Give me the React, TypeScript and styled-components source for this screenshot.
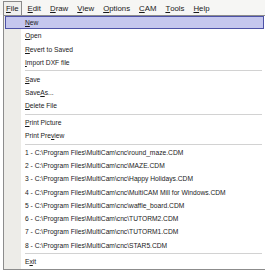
import React from "react";
import styled, { createGlobalStyle } from "styled-components";

const GlobalStyle = createGlobalStyle`
  html, body {
    margin: 0;
    padding: 0;
    background: #ffffff;
  }
  body {
    font-family: "Liberation Sans", Arial, sans-serif;
    color: #1a1a1a;
  }
`;

const Screen = styled.div`
  width: 265px;
  height: 270px;
  overflow: hidden;
  background: #ffffff;
`;

const MenuBar = styled.div`
  height: 15px;
  display: flex;
  align-items: flex-end;
  padding-left: 3px;
  background: #f6f6f4;
  font-size: 7.8px;
`;

const BarItem = styled.div<{ $open?: boolean }>`
  height: 13px;
  display: flex;
  align-items: center;
  padding: 0 2px;
  margin-right: 3px;
  border: 1px solid ${(p) => (p.$open ? "#8a8a8a" : "transparent")};
  border-bottom: none;
  background: ${(p) => (p.$open ? "#f0f0ee" : "transparent")};
`;

const Dropdown = styled.div`
  margin-left: 3px;
  width: 259px;
  border: 1px solid #8c8c8c;
  padding: 0 1px;
  background: linear-gradient(to right, #edece8 0, #edece8 17px, #ffffff 17px);
  display: flex;
  flex-direction: column;
  font-size: 6.7px;
`;

const Item = styled.div<{ $active?: boolean }>`
  height: 13.25px;
  display: flex;
  align-items: center;
  padding-left: 19px;
  box-sizing: border-box;
  border: 1px solid ${(p) => (p.$active ? "#4d52a6" : "transparent")};
  background: ${(p) => (p.$active ? "#c5c7ee" : "transparent")};
  white-space: nowrap;
`;

const Separator = styled.div`
  height: 3.5px;
  display: flex;
  align-items: center;
  padding-left: 20px;
  padding-right: 2px;

  &::after {
    content: "";
    flex: 1;
    height: 1px;
    background: #d2d2d2;
  }
`;

const Key = styled.span`
  text-decoration: underline;
  text-underline-offset: 1px;
`;

const label = (text: string, key?: number) => {
  if (key === undefined) return text;
  return (
    <>
      {text.slice(0, key)}
      <Key>{text[key]}</Key>
      {text.slice(key + 1)}
    </>
  );
};

const barItems: [string, number][] = [
  ["File", 0],
  ["Edit", 0],
  ["Draw", 0],
  ["View", 0],
  ["Options", 0],
  ["CAM", 0],
  ["Tools", 0],
  ["Help", 0],
];

type Entry = { text: string; key?: number } | "sep";

const entries: Entry[] = [
  { text: "New", key: 0 },
  { text: "Open", key: 0 },
  { text: "Revert to Saved", key: 0 },
  { text: "Import DXF file", key: 0 },
  "sep",
  { text: "Save", key: 0 },
  { text: "Save As...", key: 5 },
  { text: "Delete File", key: 0 },
  "sep",
  { text: "Print Picture", key: 0 },
  { text: "Print Preview", key: 9 },
  "sep",
  { text: "1 - C:\\Program Files\\MultiCam\\cnc\\round_maze.CDM" },
  { text: "2 - C:\\Program Files\\MultiCam\\cnc\\MAZE.CDM" },
  { text: "3 - C:\\Program Files\\MultiCam\\cnc\\Happy Holidays.CDM" },
  { text: "4 - C:\\Program Files\\MultiCam\\cnc\\MultiCAM Mill for Windows.CDM" },
  { text: "5 - C:\\Program Files\\MultiCam\\cnc\\waffle_board.CDM" },
  { text: "6 - C:\\Program Files\\MultiCam\\cnc\\TUTORM2.CDM" },
  { text: "7 - C:\\Program Files\\MultiCam\\cnc\\TUTORM1.CDM" },
  { text: "8 - C:\\Program Files\\MultiCam\\cnc\\STAR5.CDM" },
  "sep",
  { text: "Exit", key: 1 },
];

const App = () => (
  <Screen>
    <GlobalStyle />
    <MenuBar>
      {barItems.map(([text, key], i) => (
        <BarItem key={text} $open={i === 0}>
          {label(text, key)}
        </BarItem>
      ))}
    </MenuBar>
    <Dropdown>
      {entries.map((e, i) =>
        e === "sep" ? (
          <Separator key={i} />
        ) : (
          <Item key={i} $active={i === 0}>
            {label(e.text, e.key)}
          </Item>
        )
      )}
    </Dropdown>
  </Screen>
);

export default App;
